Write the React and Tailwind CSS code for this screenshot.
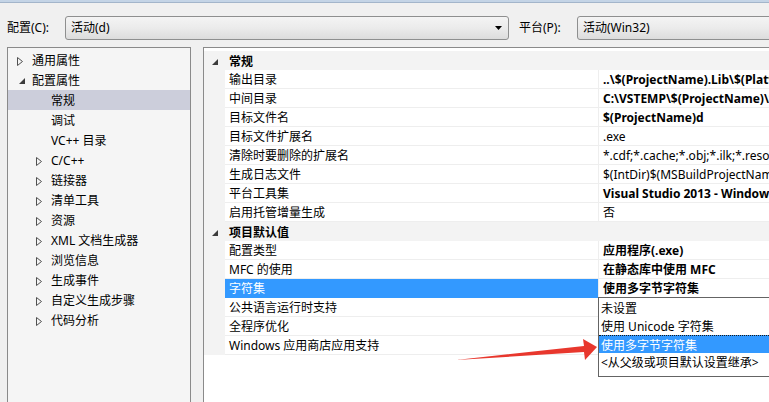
import React from "react"

const font = "font-['Noto_Sans','Noto_Sans_CJK_SC',sans-serif]"

const tree = [
  { label: "通用属性", level: 0, state: "closed" },
  { label: "配置属性", level: 0, state: "open" },
  { label: "常规", level: 1, selected: true },
  { label: "调试", level: 1 },
  { label: "VC++ 目录", level: 1 },
  { label: "C/C++", level: 1, state: "closed" },
  { label: "链接器", level: 1, state: "closed" },
  { label: "清单工具", level: 1, state: "closed" },
  { label: "资源", level: 1, state: "closed" },
  { label: "XML 文档生成器", level: 1, state: "closed" },
  { label: "浏览信息", level: 1, state: "closed" },
  { label: "生成事件", level: 1, state: "closed" },
  { label: "自定义生成步骤", level: 1, state: "closed" },
  { label: "代码分析", level: 1, state: "closed" },
]

const groups = [
  {
    title: "常规",
    rows: [
      ["输出目录", "..\\$(ProjectName).Lib\\$(Platform)\\$(Configuration)\\", true],
      ["中间目录", "C:\\VSTEMP\\$(ProjectName)\\$(Configuration)\\", true],
      ["目标文件名", "$(ProjectName)d", true],
      ["目标文件扩展名", ".exe", false],
      ["清除时要删除的扩展名", "*.cdf;*.cache;*.obj;*.ilk;*.resources;*.tlb", false],
      ["生成日志文件", "$(IntDir)$(MSBuildProjectName).log", false],
      ["平台工具集", "Visual Studio 2013 - Windows XP (v120_xp)", true],
      ["启用托管增量生成", "否", false],
    ],
  },
  {
    title: "项目默认值",
    rows: [
      ["配置类型", "应用程序(.exe)", true],
      ["MFC 的使用", "在静态库中使用 MFC", true],
      ["字符集", "使用多字节字符集", true, true],
      ["公共语言运行时支持", "", false],
      ["全程序优化", "", false],
      ["Windows 应用商店应用支持", "", false],
    ],
  },
]

const options = ["未设置", "使用 Unicode 字符集", "使用多字节字符集", "<从父级或项目默认设置继承>"]

function Closed() {
  return (
    <svg width="6" height="9" viewBox="0 0 6 9">
      <polygon points="0.5,0.5 5.5,4.5 0.5,8.5" fill="none" stroke="#505050" />
    </svg>
  )
}

function Open() {
  return (
    <svg width="6" height="6" viewBox="0 0 6 6">
      <polygon points="6,0 6,6 0,6" fill="#3c3c3c" />
    </svg>
  )
}

function Combo({ text, className }) {
  return (
    <div
      className={`h-[24px] flex items-center justify-between pl-[5px] pr-[6px] border border-[#8e8f8f] rounded-[3px] bg-gradient-to-b from-[#f4f4f4] via-[#ebebeb] to-[#dcdcdc] ${className}`}
    >
      <span>{text}</span>
      <svg width="7" height="4" viewBox="0 0 7 4">
        <polygon points="0,0 7,0 3.5,4" fill="#000" />
      </svg>
    </div>
  )
}

export default function App() {
  return (
    <div className={`relative w-[769px] h-[402px] overflow-hidden bg-[#f0f0f0] text-[12px] text-black ${font}`}>
      <div className="h-[3px] bg-[#c4d4e6] border-b border-[#a3b5ca]" />

      {/* config / platform bar */}
      <div className="flex items-center pl-[7px] pt-[13px] w-[1000px]">
        <span className="w-[58px]">配置(C):</span>
        <Combo text="活动(d)" className="w-[444px]" />
        <span className="w-[58px] ml-[10px]">平台(P):</span>
        <Combo text="活动(Win32)" className="w-[300px]" />
      </div>

      <div className="flex pl-[7px] pt-[7px] gap-[12px] w-[1000px]">
        {/* tree */}
        <div className="w-[184px] h-[400px] shrink-0 border border-[#8a8a8a] bg-[#f5f5f5] pt-[2px]">
          {tree.map((n) => (
            <div
              key={n.label}
              className={`flex items-center h-[20px] pt-[2px] ${n.selected ? "bg-[#cccedb]" : ""}`}
            >
              {n.level === 1 && <div className="w-[19px] shrink-0" />}
              <div className="w-[24px] shrink-0 flex justify-center">
                {n.state === "closed" && <Closed />}
                {n.state === "open" && (
                  <span className="ml-[4px] flex">
                    <Open />
                  </span>
                )}
              </div>
              <span className="whitespace-nowrap">{n.label}</span>
            </div>
          ))}
        </div>

        {/* property grid */}
        <div className="w-[600px] h-[400px] shrink-0 border border-[#8a8a8a] bg-white pt-[3px]">
          {groups.map((g) => (
            <div key={g.title}>
              <div className="flex items-center h-[19px] pt-[2px] bg-[#f3f3f3]">
                <div className="w-[21px] shrink-0 flex justify-center pl-[1px]">
                  <Open />
                </div>
                <span className="pl-[4px] font-bold">{g.title}</span>
              </div>
              {g.rows.map(([name, value, bold, selected]) => (
                <div key={name} className="flex h-[19px]">
                  <div className="w-[21px] shrink-0 bg-[#f3f3f3]" />
                  <div
                    className={`w-[374px] shrink-0 flex items-center pl-[4px] pt-[2px] border-r border-b border-[#eeeeee] ${
                      selected ? "bg-[#3399ff] text-white border-b-[#3399ff]" : ""
                    }`}
                  >
                    {name}
                  </div>
                  <div
                    className={`flex-1 min-w-0 flex items-center pl-[4px] pt-[2px] border-b border-[#eeeeee] whitespace-nowrap overflow-hidden ${
                      bold ? "font-bold" : ""
                    }`}
                  >
                    {value}
                  </div>
                </div>
              ))}
            </div>
          ))}
        </div>
      </div>

      {/* open drop-down list */}
      <div className="absolute left-[598px] top-[297px] w-[220px] h-[80px] border border-[#646464] bg-white pt-[1px]">
        {options.map((o, i) => (
          <div
            key={o}
            className={`h-[18px] flex items-center pl-[2px] pt-[2px] whitespace-nowrap ${
              i === 2 ? "bg-[#3399ff] text-white border-t border-dotted border-[#1a1a1a]" : ""
            }`}
          >
            {o}
          </div>
        ))}
      </div>

      {/* red annotation arrow */}
      <svg className="absolute left-0 top-0 pointer-events-none" width="769" height="402" viewBox="0 0 769 402">
        <polygon
          points="456,360 584,346 583,339 597,347 585,360 584,352"
          fill="#e8372d"
        />
      </svg>
    </div>
  )
}
